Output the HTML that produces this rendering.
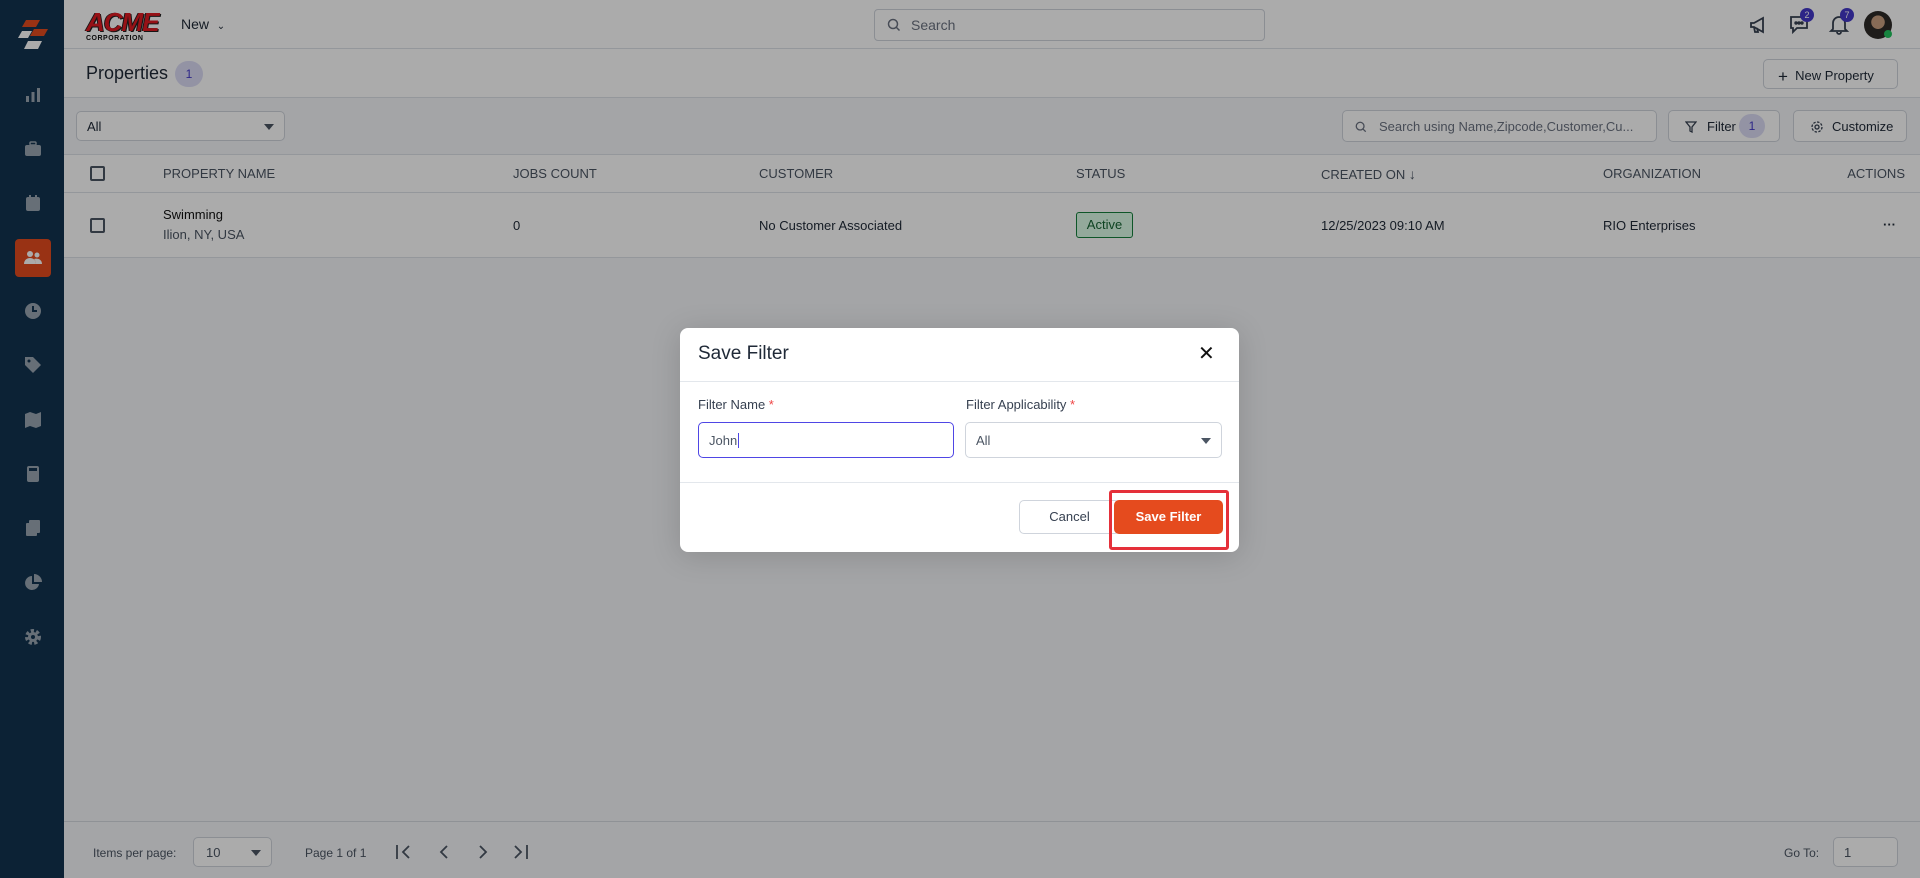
<!DOCTYPE html>
<html><head><meta charset="utf-8"><style>
*{box-sizing:border-box;margin:0;padding:0}
body{width:1920px;height:878px;overflow:hidden;font-family:"Liberation Sans",sans-serif;background:#f5f6f9;position:relative;color:#1f2937}
.abs{position:absolute}
.sb{left:0;top:0;width:64px;height:878px;background:#12334f}
.ic{position:absolute;left:23px;width:20px;height:20px}
.top{left:64px;top:0;right:0;height:49px;background:#fff;border-bottom:1px solid #dde1e7}
.pb{left:64px;top:49px;right:0;height:49px;background:#fff;border-bottom:1px solid #dde1e7}
.fr{left:64px;top:98px;right:0;height:57px;background:#f5f6f9;border-bottom:1px solid #dde1e7}
.hr{left:64px;top:155px;right:0;height:38px;background:#fff;border-bottom:1px solid #dde1e7;font-size:13px;color:#4b5563}
.dr{left:64px;top:193px;right:0;height:65px;background:#fff;border-bottom:1px solid #dde1e7;font-size:13px}
.box{border:1px solid #cfd4dc;border-radius:5px;background:#fff}
.cb{width:15px;height:15px;border:2px solid #4b5563;border-radius:2px;position:absolute}
.ft{left:64px;top:821px;right:0;height:57px;border-top:1px solid #d6dae0;font-size:12px;color:#4b5563}
.ov{left:0;top:0;width:1920px;height:878px;background:rgba(0,0,0,.33)}
.modal{left:680px;top:328px;width:559px;height:224px;background:#fff;border-radius:8px;box-shadow:0 4px 30px rgba(0,0,0,.15)}
</style></head><body>
<div class="abs sb">
 <svg class="abs" style="left:14px;top:18px" width="38" height="38" viewBox="0 0 38 38"><polygon points="12,2 26,2 22,9 8,9" fill="#e54b1e"/><polygon points="20,11 34,11 30,18 16,18" fill="#e54b1e"/><polygon points="8,13 18,13 14,20 4,20" fill="#fff"/><polygon points="14,23 28,23 24,31 10,31" fill="#fff"/></svg>
 <svg class="ic" style="top:85px" viewBox="0 0 20 20" fill="#9aa6b2"><rect x="3" y="11" width="3" height="6"/><rect x="8.5" y="7" width="3" height="10"/><rect x="14" y="3" width="3" height="14"/></svg>
 <svg class="ic" style="top:139px" viewBox="0 0 20 20" fill="#9aa6b2"><rect x="2" y="6" width="16" height="11" rx="2"/><rect x="7" y="3" width="6" height="3" rx="1" fill="none" stroke="#9aa6b2" stroke-width="1.5"/></svg>
 <svg class="ic" style="top:193px" viewBox="0 0 20 20" fill="#9aa6b2"><rect x="3" y="4" width="14" height="14" rx="2"/><rect x="6" y="2" width="2" height="4"/><rect x="12" y="2" width="2" height="4"/></svg>
 <div class="abs" style="left:15px;top:239px;width:36px;height:38px;background:#e54b1e;border-radius:4px"></div>
 <svg class="ic" style="top:248px" viewBox="0 0 20 20" fill="#fff"><circle cx="7" cy="6" r="3"/><circle cx="14" cy="7" r="2.5"/><path d="M1 16c0-4 3-6 6-6s6 2 6 6z"/><path d="M13 16c0-2-1-4-2-5 3-1 8 0 8 5z"/></svg>
 <svg class="ic" style="top:301px" viewBox="0 0 20 20"><circle cx="10" cy="10" r="8" fill="#9aa6b2"/><path d="M10 5v5h4" stroke="#12334f" stroke-width="2" fill="none"/></svg>
 <svg class="ic" style="top:355px" viewBox="0 0 20 20" fill="#9aa6b2"><path d="M2 2h8l8 8-8 8-8-8z"/><circle cx="6" cy="6" r="1.5" fill="#12334f"/></svg>
 <svg class="ic" style="top:410px" viewBox="0 0 20 20" fill="#9aa6b2"><path d="M2 4l5-2 6 2 5-2v14l-5 2-6-2-5 2z"/></svg>
 <svg class="ic" style="top:464px" viewBox="0 0 20 20" fill="#9aa6b2"><rect x="4" y="2" width="12" height="16" rx="2"/><rect x="6" y="4" width="8" height="3" fill="#12334f"/></svg>
 <svg class="ic" style="top:518px" viewBox="0 0 20 20" fill="#9aa6b2"><rect x="6" y="2" width="11" height="13" rx="1"/><rect x="3" y="5" width="11" height="13" rx="1"/></svg>
 <svg class="ic" style="top:573px" viewBox="0 0 20 20" fill="#9aa6b2"><path d="M9 3a7 7 0 1 0 7 8H9z"/><path d="M11 1v8h8a8 8 0 0 0-8-8z"/></svg>
 <svg class="ic" style="top:627px" viewBox="0 0 20 20"><circle cx="10" cy="10" r="6" fill="none" stroke="#9aa6b2" stroke-width="4" stroke-dasharray="3 2.2"/><circle cx="10" cy="10" r="5" fill="#9aa6b2"/><circle cx="10" cy="10" r="2" fill="#12334f"/></svg>
</div>
<div class="abs top">
 <div class="abs" style="left:22px;top:9px;width:74px;height:34px">
  <div style="font:italic 900 26px/26px 'Liberation Sans';color:#e01a22;letter-spacing:-1px;text-shadow:1px 1px 0 #222,-1px 0 0 #222">ACME</div>
  <div style="font:bold 7px/8px 'Liberation Sans';color:#111;letter-spacing:.5px">CORPORATION</div>
 </div>
 <div class="abs" style="left:117px;top:16px;font-size:14px;color:#1f2937">New &nbsp;<span style="font-size:10px">&#8964;</span></div>
 <div class="abs box" style="left:810px;top:9px;width:391px;height:32px;border-radius:4px;font-size:14px;color:#6b7280;padding:7px 0 0 36px">Search
  <svg class="abs" style="left:12px;top:8px" width="14" height="14" viewBox="0 0 14 14"><circle cx="6" cy="6" r="4.5" fill="none" stroke="#6b7280" stroke-width="1.5"/><path d="M9.5 9.5l3 3" stroke="#6b7280" stroke-width="1.5"/></svg></div>
 <svg class="abs" style="left:1684px;top:14px" width="22" height="22" viewBox="0 0 22 22" fill="none" stroke="#374151" stroke-width="1.8"><path d="M3 9v4h3l9 5V4L6 9z"/><path d="M6 13l1 5h3l-1-4"/></svg>
 <svg class="abs" style="left:1724px;top:13px" width="22" height="22" viewBox="0 0 22 22" fill="none" stroke="#374151" stroke-width="1.8"><path d="M3 4h16v11H9l-4 4v-4H3z"/><circle cx="8" cy="10" r=".8" fill="#374151"/><circle cx="11" cy="10" r=".8" fill="#374151"/><circle cx="14" cy="10" r=".8" fill="#374151"/></svg>
 <div class="abs" style="left:1736px;top:8px;width:14px;height:14px;border-radius:7px;background:#4338ca;color:#fff;font-size:9px;text-align:center;line-height:14px">2</div>
 <svg class="abs" style="left:1764px;top:13px" width="22" height="22" viewBox="0 0 22 22" fill="none" stroke="#374151" stroke-width="1.8"><path d="M5 16V10a6 6 0 0 1 12 0v6l2 2H3z"/><path d="M9 19a2 2 0 0 0 4 0"/></svg>
 <div class="abs" style="left:1776px;top:8px;width:14px;height:14px;border-radius:7px;background:#4338ca;color:#fff;font-size:9px;text-align:center;line-height:14px">7</div>
 <div class="abs" style="left:1800px;top:11px;width:28px;height:28px;border-radius:14px;background:radial-gradient(circle at 50% 40%,#c9a080 0 30%,#2d2a28 32%)"></div>
 <div class="abs" style="left:1820px;top:30px;width:8px;height:8px;border-radius:4px;background:#22c55e"></div>
</div>
<div class="abs pb">
 <div class="abs" style="left:22px;top:14px;font-size:18px;color:#1f2937">Properties</div>
 <div class="abs" style="left:111px;top:12px;width:28px;height:26px;border-radius:13px;background:#dcdcf5;color:#4338ca;font-size:12px;text-align:center;line-height:26px">1</div>
 <div class="abs box" style="left:1699px;top:10px;width:135px;height:30px;font-size:13px;padding:7px 0 0 14px"><span style="font-size:17px;vertical-align:-2px">+</span>&nbsp; New Property</div>
</div>
<div class="abs fr">
 <div class="abs box" style="left:12px;top:13px;width:209px;height:30px;font-size:13px;padding:7px 10px">All<span class="abs" style="right:10px;top:12px;border:5px solid transparent;border-top:6px solid #4b5563"></span></div>
 <div class="abs box" style="left:1278px;top:12px;width:315px;height:32px;font-size:13px;color:#6b7280;padding:8px 0 0 36px;white-space:nowrap">Search using Name,Zipcode,Customer,Cu...
  <svg class="abs" style="left:12px;top:10px" width="12" height="12" viewBox="0 0 14 14"><circle cx="6" cy="6" r="4.5" fill="none" stroke="#6b7280" stroke-width="1.5"/><path d="M9.5 9.5l3 3" stroke="#6b7280" stroke-width="1.5"/></svg></div>
 <div class="abs box" style="left:1604px;top:12px;width:112px;height:32px;font-size:13px;padding:8px 0 0 38px">Filter
  <svg class="abs" style="left:16px;top:10px" width="12" height="12" viewBox="0 0 12 12" fill="none" stroke="#374151" stroke-width="1.3"><path d="M1 1h10L7 6v5L5 10V6z"/></svg>
  <span class="abs" style="left:70px;top:3px;width:26px;height:24px;border-radius:12px;background:#dcdcf5;color:#4338ca;font-size:12px;text-align:center;line-height:24px">1</span></div>
 <div class="abs box" style="left:1729px;top:12px;width:114px;height:32px;font-size:13px;padding:8px 0 0 38px">Customize
  <svg class="abs" style="left:16px;top:9px" width="14" height="14" viewBox="0 0 14 14" fill="none" stroke="#374151" stroke-width="1.3"><circle cx="7" cy="7" r="2"/><circle cx="7" cy="7" r="5" stroke-dasharray="2.5 1.4"/></svg></div>
</div>
<div class="abs hr">
 <div class="cb" style="left:26px;top:11px"></div>
 <div class="abs" style="left:99px;top:11px">PROPERTY NAME</div>
 <div class="abs" style="left:449px;top:11px">JOBS COUNT</div>
 <div class="abs" style="left:695px;top:11px">CUSTOMER</div>
 <div class="abs" style="left:1012px;top:11px">STATUS</div>
 <div class="abs" style="left:1257px;top:11px">CREATED ON <b style="font-size:14px">&#8595;</b></div>
 <div class="abs" style="left:1539px;top:11px">ORGANIZATION</div>
 <div class="abs" style="right:15px;top:11px">ACTIONS</div>
</div>
<div class="abs dr">
 <div class="cb" style="left:26px;top:25px"></div>
 <div class="abs" style="left:99px;top:14px;color:#111">Swimming</div>
 <div class="abs" style="left:99px;top:34px;color:#4b5563">Ilion, NY, USA</div>
 <div class="abs" style="left:449px;top:25px">0</div>
 <div class="abs" style="left:695px;top:25px">No Customer Associated</div>
 <div class="abs" style="left:1012px;top:19px;width:57px;height:26px;border:1px solid #15803d;background:#dcfce7;color:#166534;border-radius:3px;text-align:center;line-height:24px">Active</div>
 <div class="abs" style="left:1257px;top:25px">12/25/2023 09:10 AM</div>
 <div class="abs" style="left:1539px;top:25px">RIO Enterprises</div>
 <div class="abs" style="right:24px;top:24px;font-weight:bold">&middot;&middot;&middot;</div>
</div>
<div class="abs ft">
 <div class="abs" style="left:29px;top:24px">Items per page:</div>
 <div class="abs box" style="left:129px;top:15px;width:79px;height:30px;font-size:13px;padding:7px 12px">10<span class="abs" style="right:10px;top:12px;border:5px solid transparent;border-top:6px solid #4b5563"></span></div>
 <div class="abs" style="left:241px;top:24px">Page 1 of 1</div>
 <svg class="abs" style="left:330px;top:20px" width="140" height="20" viewBox="0 0 140 20" fill="none" stroke="#4b5563" stroke-width="1.8"><path d="M3 3v14M15 4l-6 6 6 6"/><path d="M53 4l-6 6 6 6"/><path d="M86 4l6 6-6 6"/><path d="M121 4l6 6-6 6M133 3v14"/></svg>
 <div class="abs" style="left:1720px;top:24px">Go To:</div>
 <div class="abs box" style="left:1769px;top:15px;width:65px;height:30px;font-size:13px;padding:7px 10px">1</div>
</div>
<div class="abs ov"></div>
<div class="abs modal">
 <div class="abs" style="left:18px;top:15px;font-size:19px;color:#1f2937">Save Filter</div>
 <div class="abs" style="left:518px;top:13px;font-size:20px;color:#111">&#10005;</div>
 <div class="abs" style="left:0;top:53px;width:559px;border-top:1px solid #e3e7ec"></div>
 <div class="abs" style="left:18px;top:69px;font-size:13px;color:#374151">Filter Name <span style="color:#ef4444">*</span></div>
 <div class="abs" style="left:286px;top:69px;font-size:13px;color:#374151">Filter Applicability <span style="color:#ef4444">*</span></div>
 <div class="abs" style="left:18px;top:94px;width:256px;height:36px;border:1px solid #4f46e5;border-radius:5px;font-size:13px;color:#4b5563;padding:10px 10px">John<span style="border-left:1px solid #4f46e5;margin-left:1px"></span></div>
 <div class="abs box" style="left:285px;top:94px;width:257px;height:36px;font-size:13px;color:#4b5563;padding:10px 10px">All<span class="abs" style="right:10px;top:15px;border:5px solid transparent;border-top:6px solid #4b5563"></span></div>
 <div class="abs" style="left:0;top:154px;width:559px;border-top:1px solid #e3e7ec"></div>
 <div class="abs box" style="left:339px;top:172px;width:101px;height:34px;font-size:13px;color:#374151;text-align:center;line-height:32px">Cancel</div>
 <div class="abs" style="left:429px;top:162px;width:120px;height:60px;border:3px solid #e5303a;border-radius:3px"></div>
 <div class="abs" style="left:434px;top:172px;width:109px;height:34px;background:#e54b1e;border-radius:5px;color:#fff;font-size:13px;font-weight:bold;text-align:center;line-height:34px">Save Filter</div>
</div>
</body></html>
